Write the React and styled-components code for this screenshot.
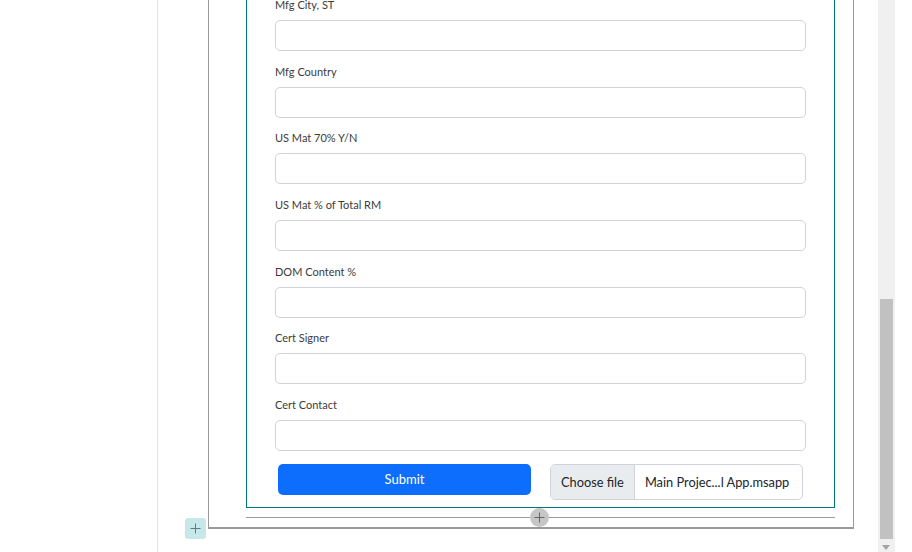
import styled, { createGlobalStyle } from "styled-components";

const GlobalStyle = createGlobalStyle`
    html, body {
        margin: 0;
        padding: 0;
        background: #ffffff;
        font-family: Lato, "Open Sans", sans-serif;
        overflow: hidden;
    }
    #root {
        height: 100vh;
    }
`;

const Screen = styled.div`
    display: flex;
    height: 552px;
    width: 912px;
    overflow: hidden;
`;

const SidePanel = styled.div`
    width: 157px;
    flex-shrink: 0;
    border-right: 1px solid #e3e3e3;
`;

const Canvas = styled.div`
    flex: 1;
    padding: 0 24px 0 50px;
    position: relative;
`;

const OuterBox = styled.div`
    position: relative;
    border: 1px solid #9a9a9a;
    border-top: none;
    border-bottom-width: 2px;
    padding: 0 18px 9px 37px;
    margin-top: -3px;
    background: #fff;
`;

const FormBox = styled.div`
    border: 1px solid #00777a;
    border-top: none;
    padding: 0 28px 7px 28px;
`;

const Field = styled.div`
    display: flex;
    flex-direction: column;
    margin-bottom: 12.7px;
`;

const Label = styled.label`
    font-size: 11px;
    line-height: 15px;
    color: #3b3b3b;
    margin-bottom: 8px;
`;

const Input = styled.div`
    height: 29px;
    border: 1px solid #ced4da;
    border-radius: 5px;
    background: #fff;
`;

const ButtonRow = styled.div`
    display: grid;
    grid-template-columns: 1fr 1fr;
    column-gap: 19px;
    padding: 0 3px;
    align-items: start;
`;

const SubmitButton = styled.button`
    height: 31px;
    border: none;
    border-radius: 5px;
    background: #0d6efd;
    color: #fff;
    font-family: Lato, "Open Sans", sans-serif;
    font-size: 13px;
    cursor: pointer;
`;

const FileInput = styled.div`
    display: flex;
    height: 34px;
    border: 1px solid #ced4da;
    border-radius: 5px;
    overflow: hidden;
    font-size: 12.8px;
    color: #212529;
`;

const FileButton = styled.span`
    display: flex;
    align-items: center;
    flex-shrink: 0;
    padding: 0 10px;
    background: #e9ecef;
    border-right: 1px solid #ced4da;
    white-space: nowrap;
`;

const FileName = styled.span`
    display: flex;
    align-items: center;
    padding: 0 10px;
    white-space: nowrap;
`;

const Divider = styled.div`
    position: relative;
    height: 1px;
    background: #9a9a9a;
    margin-top: 9px;
`;

const LineAdd = styled.div`
    position: absolute;
    left: 284px;
    top: -9px;
    width: 19px;
    height: 19px;
    border-radius: 50%;
    background: #c6c6c6;
    display: flex;
    align-items: center;
    justify-content: center;
`;

const CornerAdd = styled.div`
    position: absolute;
    left: -24px;
    bottom: -12px;
    width: 21px;
    height: 21px;
    border-radius: 3px;
    background: #c6e8ea;
    display: flex;
    align-items: center;
    justify-content: center;
`;

const Scrollbar = styled.div`
    width: 17px;
    flex-shrink: 0;
    background: #f0f0f0;
    position: relative;
    margin-right: 17px;
`;

const Thumb = styled.div`
    position: absolute;
    left: 2px;
    right: 2px;
    top: 299px;
    bottom: 13px;
    background: #c1c1c1;
`;

const DownArrow = styled.div`
    position: absolute;
    left: 4px;
    bottom: 2px;
    width: 0;
    height: 0;
    border-left: 4px solid transparent;
    border-right: 4px solid transparent;
    border-top: 5px solid #a3a3a3;
`;

const Plus = ({ color }) => (
    <svg width="11" height="11" viewBox="0 0 11 11">
        <path d="M5.5 0.5v10M0.5 5.5h10" stroke={color} strokeWidth="1" fill="none" />
    </svg>
);

const fields = [
    "Mfg City, ST",
    "Mfg Country",
    "US Mat 70% Y/N",
    "US Mat % of Total RM",
    "DOM Content %",
    "Cert Signer",
    "Cert Contact",
];

const App = () => {
    return (
        <>
            <GlobalStyle />
            <Screen>
                <SidePanel />
                <Canvas>
                    <OuterBox>
                        <FormBox>
                            {fields.map((f) => (
                                <Field key={f}>
                                    <Label>{f}</Label>
                                    <Input />
                                </Field>
                            ))}
                            <ButtonRow>
                                <SubmitButton>Submit</SubmitButton>
                                <FileInput>
                                    <FileButton>Choose file</FileButton>
                                    <FileName>Main Projec...l App.msapp</FileName>
                                </FileInput>
                            </ButtonRow>
                        </FormBox>
                        <Divider>
                            <LineAdd>
                                <Plus color="#666" />
                            </LineAdd>
                        </Divider>
                        <CornerAdd>
                            <Plus color="#5f7d80" />
                        </CornerAdd>
                    </OuterBox>
                </Canvas>
                <Scrollbar>
                    <Thumb />
                    <DownArrow />
                </Scrollbar>
            </Screen>
        </>
    );
};

export default App;
